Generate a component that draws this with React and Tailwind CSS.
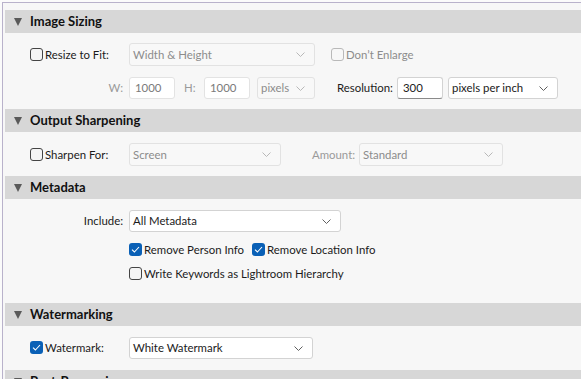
import React from 'react'

function Chevron({ dim }) {
  return (
    <svg width="9" height="5" viewBox="0 0 9 5" className="shrink-0">
      <polyline points="0.5,0.5 4.5,4.5 8.5,0.5" fill="none" stroke={dim ? '#b8b8b8' : '#606060'} strokeWidth="1" />
    </svg>
  )
}

function Select({ value, w, h = 'h-[23px]', dim }) {
  return (
    <div
      className={`${w} ${h} flex items-center justify-between pl-[3px] pr-[9px] rounded-[3px] border ${
        dim ? 'border-[#e2e2e2] bg-[#f8f8f8] text-[#8c8c8c]' : 'border-[#d3d3d3] bg-white text-[#1b1b1b]'
      }`}
    >
      <span>{value}</span>
      <Chevron dim={dim} />
    </div>
  )
}

function Input({ value, dim }) {
  return (
    <div
      className={`w-[46px] h-[22px] flex items-center pl-[5px] rounded-[3px] border bg-white ${
        dim ? 'border-[#e3e3e3] text-[#7a7a7a]' : 'border-[#d3d3d3] border-b-[#8a8a8a] text-[#1b1b1b]'
      }`}
    >
      {value}
    </div>
  )
}

function Check({ checked, dim }) {
  if (checked) {
    return (
      <div className="w-[13px] h-[13px] rounded-[3px] bg-[#0a60b6] flex items-center justify-center shrink-0">
        <svg width="9" height="7" viewBox="0 0 9 7">
          <polyline points="1,3.6 3.4,6 8,1" fill="none" stroke="white" strokeWidth="1.1" />
        </svg>
      </div>
    )
  }
  return (
    <div
      className={`w-[13px] h-[13px] rounded-[3px] border shrink-0 ${
        dim ? 'border-[#b9b9b9] bg-[#f7f7f7]' : 'border-[#444] bg-[#f4f4f4]'
      }`}
    />
  )
}

function Header({ title }) {
  return (
    <div className="ml-[2px] h-[23px] bg-[#d7d7d7] flex items-center">
      <svg width="8" height="8" viewBox="0 0 8 8" className="ml-[9px] mr-[8px]">
        <polygon points="0,0 8,0 4,8" fill="#5a5a5a" />
      </svg>
      <span className="font-bold text-[13px] text-[#111]">{title}</span>
    </div>
  )
}

function Label({ children, dim, check, checked }) {
  return (
    <div className="w-[99px] shrink-0 flex items-center">
      {check ? (
        <div className="flex items-center gap-[2px]">
          <Check checked={checked} />
          <span className="text-[#1b1b1b]">{children}</span>
        </div>
      ) : (
        <span className={`ml-auto mr-[6px] ${dim ? 'text-[#9a9a9a]' : 'text-[#1b1b1b]'}`}>{children}</span>
      )}
    </div>
  )
}

export default function App() {
  return (
    <div
      className="w-[581px] h-[379px] overflow-hidden bg-[#fbfbfb] pt-[2px] pl-[2px] text-[11.4px]"
      style={{ fontFamily: 'Lato, "Open Sans", sans-serif' }}
    >
      <div className="h-full border-t border-l border-[#b9b2cb] bg-[#f7f7f7] pt-[7px]">
        <Header title="Image Sizing" />
        <div className="pl-[27px] pt-[10px] pb-[10px]">
          <div className="flex items-center h-[23px]">
            <Label check>Resize to Fit:</Label>
            <Select value="Width & Height" w="w-[186px]" dim />
            <div className="ml-[16px] flex items-center gap-[2px]">
              <Check dim />
              <span className="text-[#8c8c8c]">Don’t Enlarge</span>
            </div>
          </div>
          <div className="flex items-center h-[22px] mt-[11px]">
            <Label dim>W:</Label>
            <Input value="1000" dim />
            <span className="ml-[9px] w-[20px] text-[#9a9a9a]">H:</span>
            <Input value="1000" dim />
            <div className="ml-[7px]">
              <Select value="pixels" w="w-[58px]" h="h-[22px]" dim />
            </div>
            <span className="ml-[22px] w-[60px] text-[#1b1b1b]">Resolution:</span>
            <Input value="300" />
            <div className="ml-[5px]">
              <Select value="pixels per inch" w="w-[110px]" h="h-[22px]" />
            </div>
          </div>
        </div>

        <Header title="Output Sharpening" />
        <div className="pl-[27px] pt-[11px] pb-[10px]">
          <div className="flex items-center h-[23px]">
            <Label check>Sharpen For:</Label>
            <Select value="Screen" w="w-[152px]" dim />
            <span className="ml-[31px] w-[47px] text-[#9a9a9a]">Amount:</span>
            <Select value="Standard" w="w-[144px]" dim />
          </div>
        </div>

        <Header title="Metadata" />
        <div className="pl-[27px] pt-[11px] h-[104px]">
          <div className="flex items-center h-[22px]">
            <Label>Include:</Label>
            <Select value="All Metadata" w="w-[212px]" h="h-[22px]" />
          </div>
          <div className="ml-[99px] mt-[11px] flex items-center h-[13px]">
            <Check checked />
            <span className="ml-[2px] text-[#1b1b1b]">Remove Person Info</span>
            <div className="ml-[8px] flex items-center">
              <Check checked />
              <span className="ml-[2px] text-[#1b1b1b]">Remove Location Info</span>
            </div>
          </div>
          <div className="ml-[99px] mt-[11px] flex items-center h-[13px]">
            <Check />
            <span className="ml-[2px] text-[#1b1b1b]">Write Keywords as Lightroom Hierarchy</span>
          </div>
        </div>

        <Header title="Watermarking" />
        <div className="pl-[27px] pt-[11px] pb-[11px]">
          <div className="flex items-center h-[22px]">
            <Label check checked>Watermark:</Label>
            <Select value="White Watermark" w="w-[184px]" h="h-[22px]" />
          </div>
        </div>

        <Header title="Post-Processing" />
      </div>
    </div>
  )
}
